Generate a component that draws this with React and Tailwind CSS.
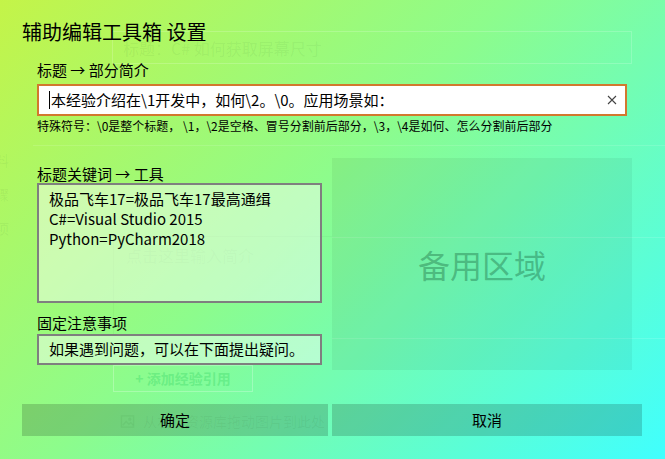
import { useState } from "react";

const font = { fontFamily: '"Noto Sans CJK SC", "Noto Sans", sans-serif' };

// faint layer: the window behind this translucent dialog
function Ghost() {
    return (
        <div className="absolute inset-0 pointer-events-none select-none">
            <div className="absolute left-[112px] top-[31px] w-[520px] h-[33px] border border-white/[0.18] pl-[10px] pt-[6px] text-[16px] leading-[20px] text-[#2f6b2f]/[0.08]">
                标题：C# 如何获取屏幕尺寸
            </div>
            <div className="absolute left-0 top-[143px] w-[9px] overflow-hidden text-[14px] leading-[34px] text-[#2f6b2f]/[0.08]">
                <div className="ml-[-5px]">料</div>
                <div className="ml-[-5px]">骤</div>
                <div className="ml-[-5px]">项</div>
            </div>
            <div className="absolute left-[33px] top-[145px] right-0 h-px bg-white/[0.12]" />
            <div className="absolute left-[332px] top-[237px] right-0 h-px bg-white/[0.12]" />
            <div className="absolute left-[332px] top-[338px] right-0 h-px bg-white/[0.12]" />
            <div className="absolute left-[113px] top-[236px] w-[219px] h-[100px] border-l border-t border-black/[0.03] pl-[12px] pt-[6px] text-[16px] text-[#2f6b2f]/[0.07]">
                点击这里输入简介
            </div>
            <div className="absolute left-[113px] top-[365px] w-[140px] h-[27px] border border-white/[0.25] flex items-center justify-center text-[14px] font-bold text-[#3fd96a]/[0.4]">
                + 添加经验引用
            </div>
            <div className="absolute left-[120px] top-[411px] flex items-center gap-[8px] text-[14px] text-[#2f6b2f]/[0.07]">
                <svg viewBox="0 0 16 16" className="w-[15px] h-[15px]" fill="none" stroke="currentColor" strokeWidth="1.4">
                    <rect x="1.5" y="2" width="13" height="12" />
                    <path d="M3 12l3.5-4 3 3 2-2 2.5 3" />
                    <circle cx="10.5" cy="5.5" r="1" />
                </svg>
                从右侧资源库拖动图片到此处
            </div>
        </div>
    );
}

export default function App() {
    const [intro, setIntro] = useState("本经验介绍在\\1开发中，如何\\2。\\0。应用场景如：");

    return (
        <div
            className="relative w-[665px] h-[459px] overflow-hidden text-black bg-[linear-gradient(135deg,#c4f448_0%,#8dfc8c_45%,#40fffe_100%)]"
            style={font}
        >
            <Ghost />

            <div className="relative flex flex-col">
                <h1 className="pt-[19px] pl-[22px] text-[20px] leading-[26px] font-normal">辅助编辑工具箱 设置</h1>

                <div className="px-[37px] pt-[14px] flex flex-col">
                    <div className="text-[15px] leading-[22px]">标题 → 部分简介</div>
                    <div className="mt-[3px] w-[590px] h-[32px] bg-white border-2 border-[#d2782e] flex items-center pl-[10px] pr-[8px]">
                        <span className="w-px h-[18px] bg-black" />
                        <input
                            value={intro}
                            onChange={(e) => setIntro(e.target.value)}
                            className="flex-1 min-w-0 pl-[1px] text-[15px] leading-[20px] outline-none bg-transparent caret-transparent"
                        />
                        <svg viewBox="0 0 10 10" className="w-[10px] h-[10px] text-[#444] ml-2" stroke="currentColor" strokeWidth="1.1">
                            <path d="M1 1l8 8M9 1l-8 8" />
                        </svg>
                    </div>
                    <div className="mt-[2px] text-[12px] leading-[16px] whitespace-nowrap">
                        特殊符号：\0是整个标题， \1，\2是空格、冒号分割前后部分，\3，\4是如何、怎么分割前后部分
                    </div>
                </div>

                <div className="pl-[37px] mt-[24px] flex gap-[10px]">
                    <div className="w-[285px] flex flex-col pt-[6px]">
                        <div className="text-[15px] leading-[20px]">标题关键词 → 工具</div>
                        <div className="mt-[-1px] h-[120px] border-2 border-[#7f7f7f] bg-white/45 pl-[10px] pt-[4px] text-[15px] leading-[20px]">
                            <div>极品飞车17=极品飞车17最高通缉</div>
                            <div>C#=Visual Studio 2015</div>
                            <div>Python=PyCharm2018</div>
                        </div>
                        <div className="mt-[10px] text-[15px] leading-[20px]">固定注意事项</div>
                        <div className="mt-[1px] h-[31px] border-2 border-[#7f7f7f] bg-white/45 pl-[10px] flex items-center text-[15px]">
                            如果遇到问题，可以在下面提出疑问。
                        </div>
                    </div>
                    <div className="w-[300px] h-[212px] bg-black/[0.05] flex items-center justify-center text-[32px] text-[#1e6e44]/[0.42]">
                        备用区域
                    </div>
                </div>

                <div className="pl-[22px] mt-[34px] flex gap-[4px]">
                    <button className="w-[306px] h-[32px] bg-black/[0.17] text-[15px]">确定</button>
                    <button className="w-[310px] h-[32px] bg-black/[0.17] text-[15px]">取消</button>
                </div>
            </div>
        </div>
    );
}
